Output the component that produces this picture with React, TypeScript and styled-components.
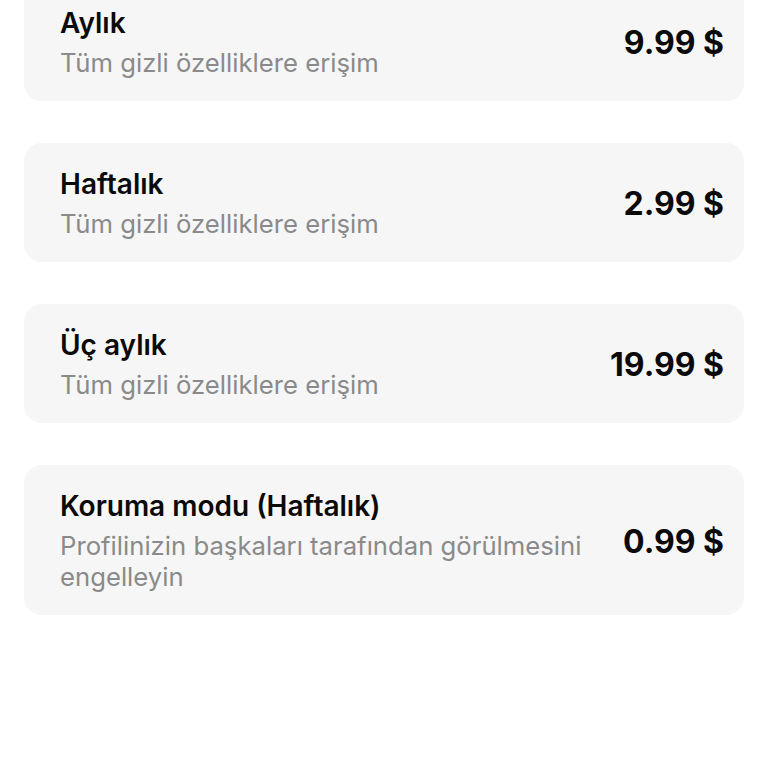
import React from "react";
import styled, { createGlobalStyle } from "styled-components";

const GlobalStyle = createGlobalStyle`
  html, body {
    margin: 0;
    padding: 0;
    background: #ffffff;
    font-family: Inter, "Noto Sans", "Liberation Sans", sans-serif;
    -webkit-font-smoothing: antialiased;
  }
`;

const Page = styled.div`
  width: 768px;
  height: 768px;
  overflow: hidden;
  background: #ffffff;
`;

const PlanList = styled.div`
  display: flex;
  flex-direction: column;
  gap: 42px;
  padding: 0 24px;
  margin-top: -18px;
`;

const PlanCard = styled.div`
  display: flex;
  align-items: center;
  gap: 30px;
  padding: 25px 20px 23px 36px;
  background: #f6f6f6;
  border-radius: 18px;
`;

const PlanInfo = styled.div`
  flex: 1;
  display: flex;
  flex-direction: column;
  gap: 8px;
  min-width: 0;
`;

const PlanTitle = styled.div`
  font-size: 28px;
  line-height: 32px;
  font-weight: 600;
  color: #0a0a0a;
`;

const PlanText = styled.div`
  font-size: 25.7px;
  line-height: 31px;
  font-weight: 400;
  color: #8a8a8a;
`;

const Price = styled.div`
  flex-shrink: 0;
  font-size: 32px;
  font-weight: 700;
  color: #0a0a0a;
  white-space: nowrap;
`;

type Plan = { title: string; text: string; price: string };

const plans: Plan[] = [
  { title: "Aylık", text: "Tüm gizli özelliklere erişim", price: "9.99 $" },
  { title: "Haftalık", text: "Tüm gizli özelliklere erişim", price: "2.99 $" },
  { title: "Üç aylık", text: "Tüm gizli özelliklere erişim", price: "19.99 $" },
  {
    title: "Koruma modu (Haftalık)",
    text: "Profilinizin başkaları tarafından görülmesini engelleyin",
    price: "0.99 $",
  },
];

export default function App() {
  return (
    <Page>
      <GlobalStyle />
      <PlanList>
        {plans.map((p) => (
          <PlanCard key={p.title}>
            <PlanInfo>
              <PlanTitle>{p.title}</PlanTitle>
              <PlanText>{p.text}</PlanText>
            </PlanInfo>
            <Price>{p.price}</Price>
          </PlanCard>
        ))}
      </PlanList>
    </Page>
  );
}
